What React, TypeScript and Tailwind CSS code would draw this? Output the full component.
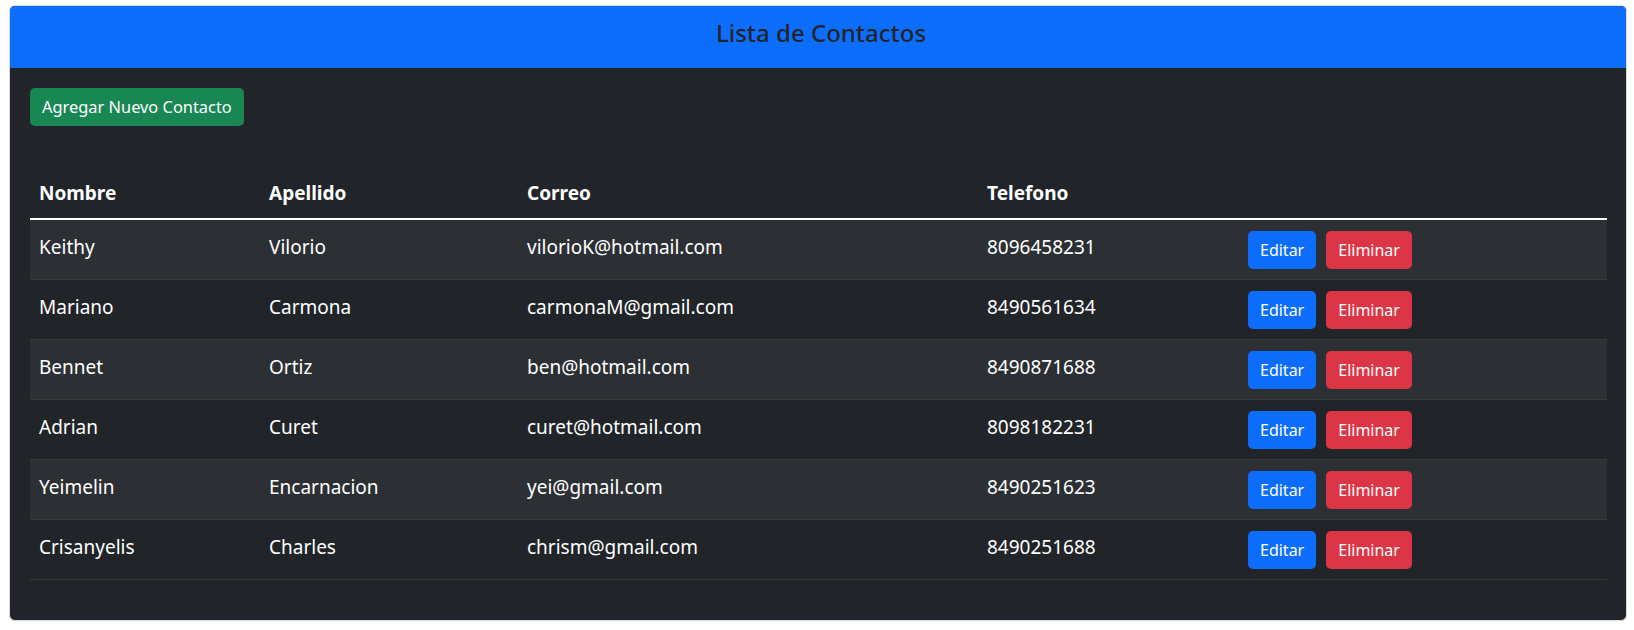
import React from 'react';

type Contacto = {
  nombre: string;
  apellido: string;
  correo: string;
  telefono: string;
};

const contactos: Contacto[] = [
  { nombre: 'Keithy', apellido: 'Vilorio', correo: 'vilorioK@hotmail.com', telefono: '8096458231' },
  { nombre: 'Mariano', apellido: 'Carmona', correo: 'carmonaM@gmail.com', telefono: '8490561634' },
  { nombre: 'Bennet', apellido: 'Ortiz', correo: 'ben@hotmail.com', telefono: '8490871688' },
  { nombre: 'Adrian', apellido: 'Curet', correo: 'curet@hotmail.com', telefono: '8098182231' },
  { nombre: 'Yeimelin', apellido: 'Encarnacion', correo: 'yei@gmail.com', telefono: '8490251623' },
  { nombre: 'Crisanyelis', apellido: 'Charles', correo: 'chrism@gmail.com', telefono: '8490251688' },
];

const cols = 'grid grid-cols-[230px_258px_460px_262px_1fr]';

export default function App(): JSX.Element {
  return (
    <div className="min-h-screen bg-white pl-[9px] pr-[7px] pt-[5px] font-['Noto_Sans',sans-serif]">
      <div className="h-[616px] overflow-hidden rounded-[6px] border border-[#dcdcdc] bg-[#212529]">
        <div className="flex h-[62px] items-center justify-center bg-[#0d6efd] pb-[8px] pl-[6px]">
          <h4 className="text-[24px] font-medium text-[#212529]">Lista de Contactos</h4>
        </div>
        <div className="pl-[20px] pr-[19px] pt-[20px]">
          <button className="h-[38px] rounded-[5px] bg-[#198754] px-[12px] text-[16.4px] text-white">
            Agregar Nuevo Contacto
          </button>
          <div className="mt-[44px] text-[19px] text-white">
            <div className={`${cols} h-[50px] items-center border-b-2 border-white pb-[2px] font-bold`}>
              <div className="px-[9px]">Nombre</div>
              <div className="px-[9px]">Apellido</div>
              <div className="px-[9px]">Correo</div>
              <div className="px-[9px]">Telefono</div>
              <div />
            </div>
            {contactos.map((c, i) => (
              <div
                key={c.correo}
                className={`${cols} h-[60px] items-center border-b border-[#373b3e] ${
                  i % 2 === 0 ? 'bg-[#2c3034]' : 'bg-[#212529]'
                }`}
              >
                <div className="px-[9px] pb-[4px]">{c.nombre}</div>
                <div className="px-[9px] pb-[4px]">{c.apellido}</div>
                <div className="px-[9px] pb-[4px]">{c.correo}</div>
                <div className="px-[9px] pb-[4px]">{c.telefono}</div>
                <div className="flex gap-[10px] px-[8px] text-[16px]">
                  <button className="h-[38px] rounded-[5px] bg-[#0d6efd] px-[12px] text-white">Editar</button>
                  <button className="h-[38px] rounded-[5px] bg-[#dc3545] px-[12px] text-white">Eliminar</button>
                </div>
              </div>
            ))}
          </div>
        </div>
      </div>
    </div>
  );
}
